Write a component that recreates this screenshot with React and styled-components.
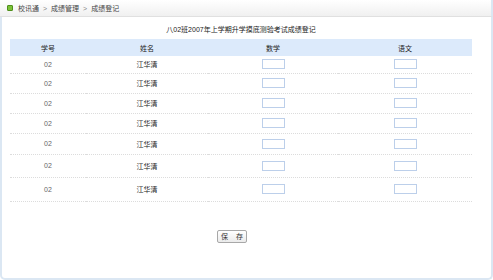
import React from "react";
import styled, { createGlobalStyle } from "styled-components";

const GlobalStyle = createGlobalStyle`
  html, body { margin: 0; padding: 0; background: #fff; }
  body {
    font-family: "Liberation Sans", "Noto Sans CJK SC", sans-serif;
    color: #333;
    -webkit-font-smoothing: antialiased;
  }
`;

const Page = styled.div`
  width: 493px;
  height: 280px;
  display: flex;
  flex-direction: column;
  box-sizing: border-box;
`;

const TopBar = styled.div`
  height: 17px;
  box-sizing: border-box;
  display: flex;
  align-items: center;
  gap: 3px;
  padding-left: 7px;
  background: linear-gradient(#ffffff, #f0f0f0);
  border-bottom: 1px solid #e0e0e0;
  border-right: 2px solid #dbe7f3;
  font-size: 7px;
  color: #444;
`;

const Bullet = styled.span`
  width: 4px;
  height: 4px;
  background: #7cc238;
  border: 1px solid #4f8f1c;
  border-radius: 1px;
  margin-right: 2px;
`;

const Sep = styled.span`
  color: #888;
  padding: 0 1px;
`;

const Frame = styled.div`
  flex: 1;
  display: flex;
  flex-direction: column;
  box-sizing: border-box;
  border: 2px solid #dbe7f3;
  border-top: none;
  border-radius: 0 0 5px 5px;
  padding: 0 19px 0 8px;
`;

const Title = styled.div`
  height: 22px;
  display: flex;
  align-items: center;
  justify-content: center;
  font-size: 7px;
  color: #222;
  padding-top: 2px;
  box-sizing: border-box;
`;

const Table = styled.table`
  width: 462px;
  border-collapse: collapse;
  table-layout: fixed;
  font-size: 7px;
  color: #333;
`;

const HeadCell = styled.th`
  height: 17px;
  padding: 0;
  background: #dceafb;
  font-weight: normal;
  color: #222;
  text-align: center;
  width: ${(p) => p.$w}px;
`;

const Row = styled.tr`
  height: ${(p) => p.$h}px;
  border-bottom: 1px dotted #dcdcdc;
`;

const Cell = styled.td`
  padding: 0;
  text-align: center;
  vertical-align: middle;
  color: ${(p) => (p.$dark ? "#222" : "#666")};
`;

const ScoreInput = styled.input`
  display: block;
  margin: 0 auto;
  width: 23px;
  height: 10px;
  box-sizing: border-box;
  border: 1px solid #bccfea;
  padding: 0;
  background: #fff;
`;

const ButtonRow = styled.div`
  display: flex;
  justify-content: center;
  padding: 28px 18px 0 0;
  width: 462px;
  box-sizing: border-box;
`;

const SaveButton = styled.button`
  width: 30px;
  height: 13px;
  padding: 0 0 0 3px;
  box-sizing: border-box;
  border: 1px solid #a8a8a8;
  border-radius: 2px;
  background: linear-gradient(#ffffff, #ebebeb);
  font-family: inherit;
  font-size: 7px;
  letter-spacing: 3px;
  color: #333;
  line-height: 11px;
`;

const heights = [17, 20, 20, 20, 21, 23, 24];
const cols = [
  { label: "学号", w: 76 },
  { label: "姓名", w: 122 },
  { label: "数学", w: 130 },
  { label: "语文", w: 134 },
];

export default function App() {
  return (
    <>
      <GlobalStyle />
      <Page>
        <TopBar>
          <Bullet />
          <span>校讯通</span>
          <Sep>&gt;</Sep>
          <span>成绩管理</span>
          <Sep>&gt;</Sep>
          <span>成绩登记</span>
        </TopBar>
        <Frame>
          <Title>八02班2007年上学期升学摸底测验考试成绩登记</Title>
          <Table>
            <thead>
              <tr>
                {cols.map((c) => (
                  <HeadCell key={c.label} $w={c.w}>
                    {c.label}
                  </HeadCell>
                ))}
              </tr>
            </thead>
            <tbody>
              {heights.map((h, i) => (
                <Row key={i} $h={h}>
                  <Cell>02</Cell>
                  <Cell $dark>江华清</Cell>
                  <Cell>
                    <ScoreInput type="text" />
                  </Cell>
                  <Cell>
                    <ScoreInput type="text" />
                  </Cell>
                </Row>
              ))}
            </tbody>
          </Table>
          <ButtonRow>
            <SaveButton>保 存</SaveButton>
          </ButtonRow>
        </Frame>
      </Page>
    </>
  );
}
